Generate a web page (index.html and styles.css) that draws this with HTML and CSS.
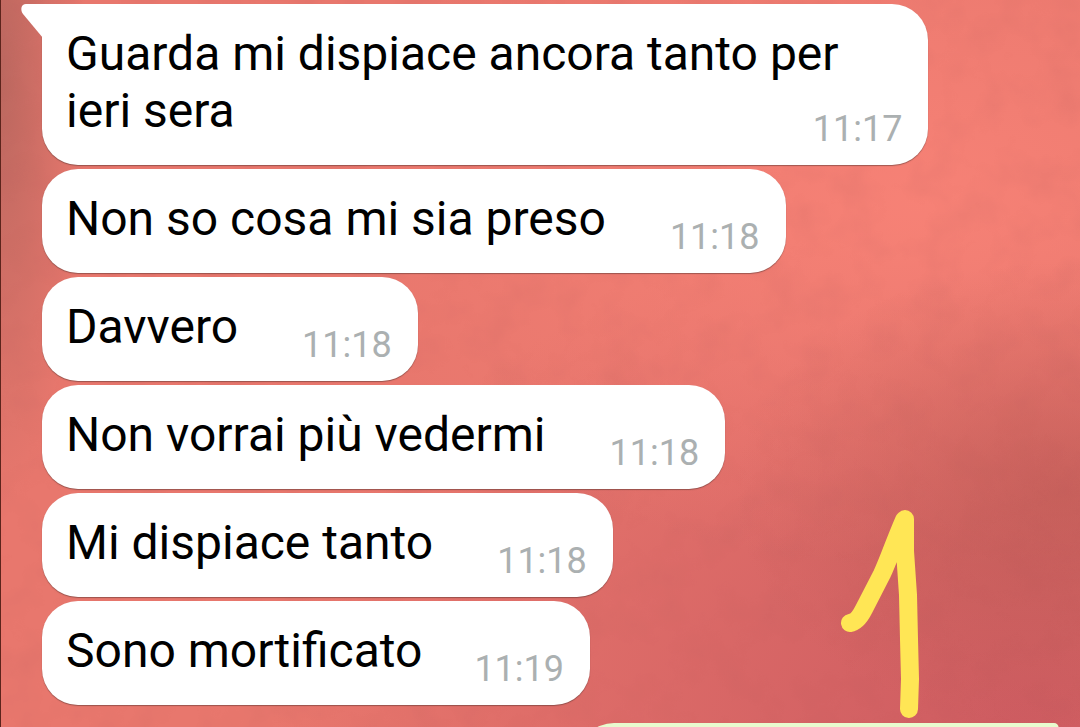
FILE: index.html
```html
<!DOCTYPE html>
<html lang="it">
<head>
    <meta charset="UTF-8">
    <meta name="viewport" content="width=device-width, initial-scale=1.0">
    <title>Chat</title>
    <link rel="stylesheet" href="styles.css">
</head>
<body>

    <!-- wallpaper grain -->
    <svg class="grain" aria-hidden="true">
        <filter id="paper">
            <feTurbulence type="fractalNoise" baseFrequency="0.025" numOctaves="3" seed="8"/>
            <feColorMatrix values="0 0 0 0 0.45  0 0 0 0 0.1  0 0 0 0 0.1  1.2 0 0 0 -0.5"/>
        </filter>
        <rect width="100%" height="100%" filter="url(#paper)"/>
    </svg>

    <main class="chat">
        <div class="message tail">
            Guarda mi dispiace ancora tanto per ieri sera
            <time>11:17</time>
        </div>
        <div class="message">
            Non so cosa mi sia preso
            <time>11:18</time>
        </div>
        <div class="message">
            Davvero
            <time>11:18</time>
        </div>
        <div class="message">
            Non vorrai più vedermi
            <time>11:18</time>
        </div>
        <div class="message">
            Mi dispiace tanto
            <time>11:18</time>
        </div>
        <div class="message compact">
            Sono mortificato
            <time>11:19</time>
        </div>
        <div class="message sent tail"></div>
    </main>

    <!-- marker drawn over the chat -->
    <svg class="marker" viewBox="0 0 80 210" role="img" aria-label="1">
        <path d="M10 114 C17 113 21 106 24 100 L42 65 C49 50 54 34 64 11 L65 10 V42 L68 86 L69 130 L70 170 L69 200"/>
    </svg>

</body>
</html>
```
FILE: styles.css
```css
body {
    margin: 0;
    min-height: 100vh;
    box-sizing: border-box;
    border-left: 1px solid #5c241c;
    overflow: hidden;
    position: relative;
    font-family: Roboto, sans-serif;
    background:
        radial-gradient(ellipse 30% 32% at 98% 68%, rgba(180, 86, 80, 0.55), transparent),
        radial-gradient(ellipse 55% 50% at 85% 28%, rgba(250, 132, 120, 0.8), transparent),
        radial-gradient(ellipse 8% 60% at 0% 10%, rgba(176, 100, 92, 0.8), transparent),
        radial-gradient(ellipse 70% 70% at 95% 100%, rgba(204, 90, 96, 0.95), transparent),
        #e8776d;
}

.grain {
    position: absolute;
    inset: 0;
    width: 100%;
    height: 100%;
    opacity: 0.2;
}

.chat {
    position: relative;
    height: 100vh;
    box-sizing: border-box;
    overflow: hidden;
    display: flex;
    flex-direction: column;
    align-items: flex-start;
    gap: 4px;
    padding: 4px 42px 0 41px;
}

.message {
    position: relative;
    flex-shrink: 0;
    max-width: 89%;
    box-sizing: border-box;
    padding: 21px 26px 26px 24px;
    border-radius: 36px;
    background: #fff;
    box-shadow: 0 1px 1px rgba(80, 50, 45, 0.5);
    color: #000;
    font-size: 48px;
    line-height: 57px;
}

time {
    float: right;
    margin: 19px 0 -19px 64px;
    color: #abb0b1;
    font-size: 36px;
}

.compact time {
    margin-left: 52px;
}

.tail {
    border-top-left-radius: 0;
}

.tail::before {
    content: "";
    position: absolute;
    top: 0;
    left: -21px;
    width: 22px;
    height: 34px;
    background: inherit;
    clip-path: path("M22 0 H5 C0 0 -1 6 2 10 L22 34 Z");
}

.sent {
    align-self: flex-end;
    width: 460px;
    height: 104px;
    margin-top: 14px;
    border-radius: 36px 0 36px 36px;
    background: #e8fbcf;
}

.sent::before {
    left: auto;
    right: -21px;
    transform: scaleX(-1);
}

.marker {
    position: absolute;
    right: 160px;
    bottom: 8px;
    width: 80px;
    height: 210px;
    fill: none;
    stroke: #ffe655;
    stroke-width: 18;
    stroke-linecap: round;
    stroke-linejoin: round;
}
```
